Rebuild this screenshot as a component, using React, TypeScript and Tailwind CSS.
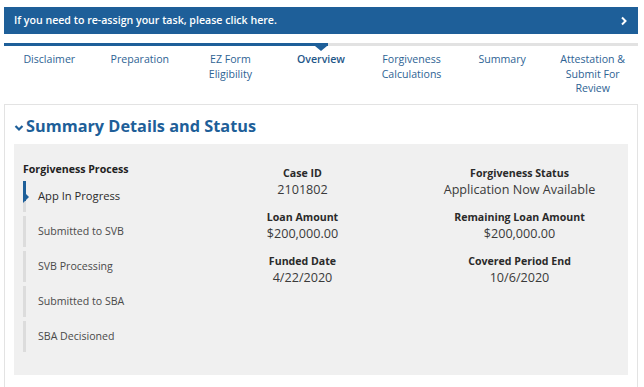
import React from "react";

const tabs = [
  ["Disclaimer"],
  ["Preparation"],
  ["EZ Form", "Eligibility"],
  ["Overview"],
  ["Forgiveness", "Calculations"],
  ["Summary"],
  ["Attestation &", "Submit For", "Review"],
];

const steps = ["App In Progress", "Submitted to SVB", "SVB Processing", "Submitted to SBA", "SBA Decisioned"];

function Field({ label, value }: { label: string; value: string }) {
  return (
    <div className="flex flex-col items-center h-[44px]">
      <div className="text-[10.6px] font-bold text-[#2a2a2a] leading-[16px]">{label}</div>
      <div className="text-[12.6px] text-[#3a3a3a] leading-[17px]">{value}</div>
    </div>
  );
}

export default function App() {
  return (
    <div className="w-[644px] h-[387px] overflow-hidden bg-white" style={{ fontFamily: '"Open Sans", sans-serif' }}>
      <div className="pt-[7px] px-[4px] pr-[6px]">
        <div className="h-[27px] bg-[#1e5f99] flex items-center justify-between pl-[10px] pr-[10px]">
          <span className="text-white text-[10.6px] font-semibold">If you need to re-assign your task, please click here.</span>
          <svg width="8" height="10" viewBox="0 0 8 10">
            <path d="M2 1.5 L5.5 5 L2 8.5" stroke="white" strokeWidth="2" fill="none" />
          </svg>
        </div>
        <div className="mt-[9px] relative h-[3px] flex">
          <div className="w-[324px] bg-[#1e5f99]" />
          <div className="flex-1 bg-[#e2e2e2]" />
          <div className="absolute left-[311px] top-[3px] w-0 h-0 border-l-[6px] border-r-[6px] border-t-[5px] border-l-transparent border-r-transparent border-t-[#1e5f99]" />
        </div>
        <div className="grid grid-cols-7 mt-[6px]">
          {tabs.map((t, i) => (
            <div
              key={i}
              className={`text-center text-[10.6px] leading-[14.5px] ${i === 3 ? "font-semibold text-[#1f5789]" : "text-[#2e6394]"}`}
            >
              {t.map((l) => (
                <div key={l}>{l}</div>
              ))}
            </div>
          ))}
        </div>
        <div className="mt-[8px] border border-[#e3e3e3] h-[300px] pl-[9px] pr-[9px]">
          <div className="flex items-center h-[39px] pt-[5px]">
            <svg width="10" height="8" viewBox="0 0 10 8" className="mr-[2px] mt-[2px]">
              <path d="M1.5 2 L5 5.5 L8.5 2" stroke="#1e5f99" strokeWidth="2.2" fill="none" />
            </svg>
            <span className="text-[16.3px] font-bold text-[#1e5f99]">Summary Details and Status</span>
          </div>
          <div className="bg-[#f0f0f0] h-[231px] flex pl-[9px] pt-[17px]">
            <div className="w-[171px]">
              <div className="text-[10.6px] font-bold text-[#222] leading-[16px]">Forgiveness Process</div>
              <div className="mt-[4px] flex flex-col gap-[4px]">
                {steps.map((s, i) => (
                  <div key={s} className="relative h-[31px] flex items-center">
                    <div className="absolute left-0 top-0 w-[3px] h-full bg-[#dcdcdc]" />
                    {i === 0 && (
                      <>
                        <div className="absolute left-0 top-0 w-[3px] h-[20px] bg-[#1e5f99]" />
                        <div className="absolute left-0 top-[10px] w-0 h-0 border-t-[6px] border-b-[6px] border-l-[6px] border-t-transparent border-b-transparent border-l-[#1e5f99]" />
                      </>
                    )}
                    <span
                      className={`pl-[15px] ${i === 0 ? "text-[11.2px] font-medium text-[#2a2a2a] mt-[1px]" : "text-[10.6px] text-[#4a4a4a] mt-[2px]"}`}
                    >
                      {s}
                    </span>
                  </div>
                ))}
              </div>
            </div>
            <div className="w-[217px] pt-[4px]">
              <Field label="Case ID" value="2101802" />
              <Field label="Loan Amount" value="$200,000.00" />
              <Field label="Funded Date" value="4/22/2020" />
            </div>
            <div className="w-[217px] pt-[4px]">
              <Field label="Forgiveness Status" value="Application Now Available" />
              <Field label="Remaining Loan Amount" value="$200,000.00" />
              <Field label="Covered Period End" value="10/6/2020" />
            </div>
          </div>
        </div>
      </div>
    </div>
  );
}
